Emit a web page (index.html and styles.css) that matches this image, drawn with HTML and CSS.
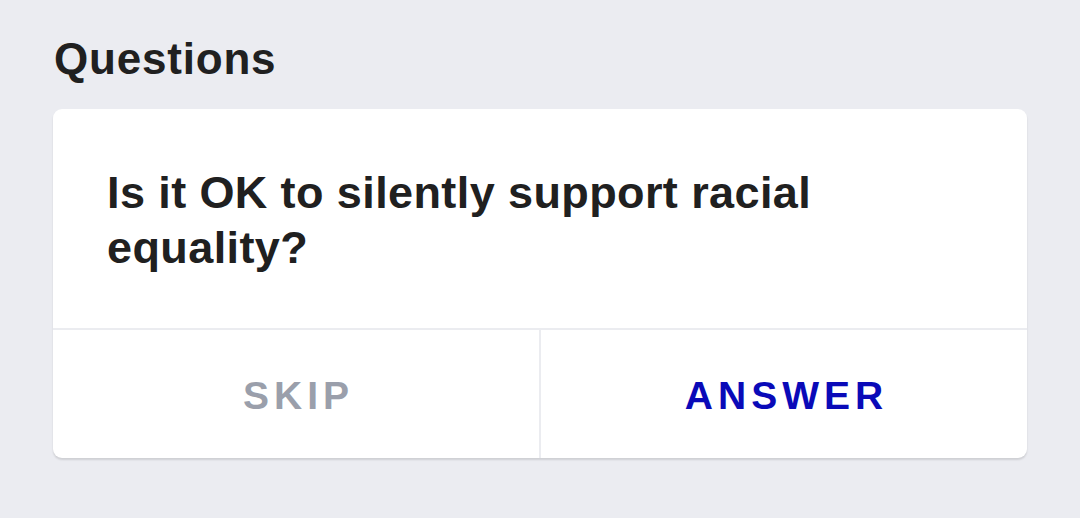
FILE: index.html
```html
<!DOCTYPE html>
<html lang="en">
<head>
    <meta charset="UTF-8">
    <title>Questions</title>
    <link rel="stylesheet" href="styles.css">
</head>
<body>
    <h2 class="section-title">Questions</h2>
    <div class="question-card">
        <div class="question-text">Is it OK to silently support racial equality?</div>
        <div class="question-actions">
            <button class="action skip">SKIP</button>
            <button class="action answer">ANSWER</button>
        </div>
    </div>
</body>
</html>
```

FILE: styles.css
```css
body {
    margin: 0;
    padding: 34px 53px 0 53px;
    background-color: #ebecf1;
    font-family: "Liberation Sans", Arial, sans-serif;
    color: #202020;
    height: 518px;
    box-sizing: border-box;
}
.section-title {
    margin: 0 0 25px 1px;
    font-size: 44px;
    font-weight: bold;
    line-height: 50px;
    letter-spacing: 0.8px;
}
.question-card {
    background-color: #fff;
    border-radius: 9px;
    box-shadow: 0 2px 2px rgba(0, 0, 0, 0.12);
    overflow: hidden;
}
.question-text {
    height: 221px;
    box-sizing: border-box;
    padding: 56px 180px 0 54px;
    font-size: 45px;
    font-weight: bold;
    line-height: 55px;
    letter-spacing: 0.4px;
    border-bottom: 2px solid #ebecf0;
}
.question-actions {
    display: flex;
    height: 128px;
}
.action {
    flex: 1;
    border: none;
    background: none;
    font-family: inherit;
    font-size: 39px;
    font-weight: bold;
    letter-spacing: 5px;
    padding: 4px 0 0 5px;
}
.skip {
    color: #9a9fab;
    border-right: 2px solid #ebecf0;
}
.answer {
    color: #0a0ab8;
}
```
